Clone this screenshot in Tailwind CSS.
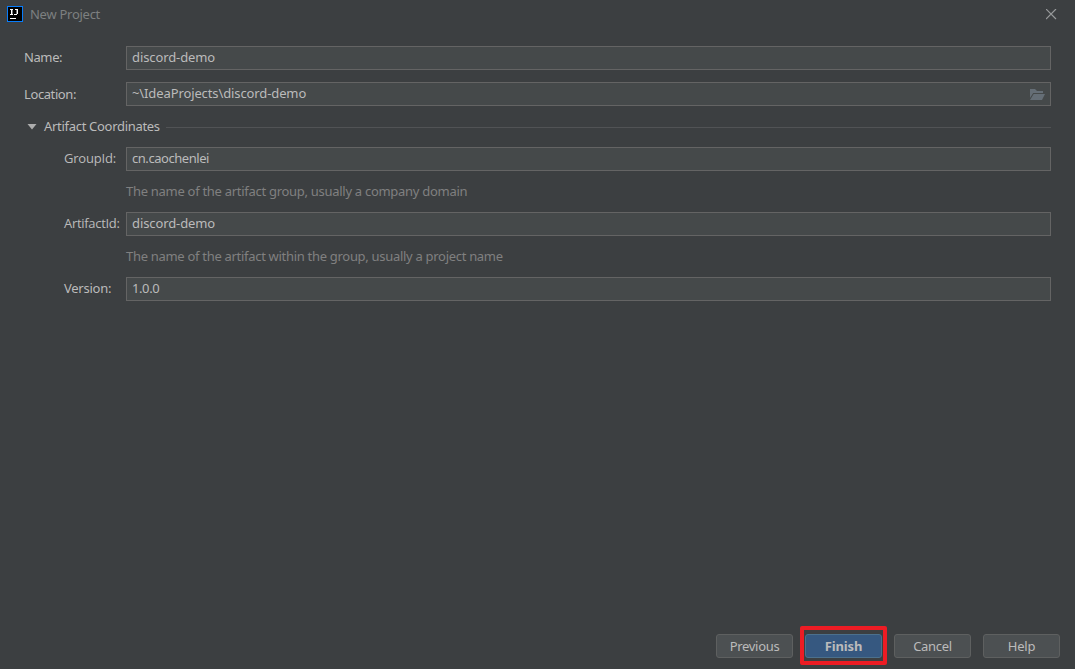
<!DOCTYPE html>
<html lang="en">
<head>
<meta charset="utf-8">
<title>New Project</title>
<script src="https://cdn.jsdelivr.net/npm/@tailwindcss/browser@4"></script>
</head>
<body class="flex h-screen w-screen flex-col overflow-hidden bg-[#3c3f41] font-['Noto_Sans',sans-serif] text-[13px] leading-[18px] text-[#bbbbbb]">
<header class="flex h-[30px] shrink-0 items-start pl-[7px] pr-[18px]">
  <svg class="mt-[6px]" width="16" height="16" viewBox="0 0 16 16" shape-rendering="crispEdges"><rect width="16" height="16" fill="#087cfa"/><rect x="1" y="1" width="14" height="14" fill="#000"/><path d="M3 3h3v1H3zM4 4h1v4H4zM3 8h3v1H3zM8 3h3v1H8zM10 4h1v4h-1zM7 8h3v1H7zM3 12h6v1H3z" fill="#fff"/><path d="M5 4h1v4H5zM9 4h1v4H9z" fill="#777"/></svg>
  <h1 class="ml-[7px] mt-[5px] tracking-[-0.27px] text-[#7d7f80]">New Project</h1>
  <svg class="ml-auto mt-[9px]" width="11" height="11" viewBox="0 0 11 11" fill="none" stroke="#989a9b" stroke-width="1.2"><path d="M0 0l10 10M10 0L0 10"/></svg>
</header>
<main class="flex flex-1 flex-col pl-6 pr-6 pt-4">
  <div class="flex h-6 items-center"><label class="w-[102px] pb-[2px] tracking-[-0.4px]">Name:</label><div class="flex h-6 flex-1 items-center border border-[#646464] bg-[#45494a] pb-[2px] pl-[5px] tracking-[-0.1px]">discord-demo</div></div>
  <div class="mt-3 flex h-6 items-center"><label class="w-[102px] tracking-[-0.4px]">Location:</label>
    <div class="flex h-6 flex-1 items-center border border-[#646464] bg-[#45494a] pl-[5px] pr-[5px]"><span class="pb-[2px] tracking-[-0.11px]">~\IdeaProjects\discord-demo</span>
      <svg class="ml-auto" width="15" height="11" viewBox="0 0 15 11" fill="#656e76"><path d="M0 9V0h5l2 2h6v2H3.200z"/><path d="M3.700 5H15l-3 6H0z"/></svg></div></div>
  <div class="mt-3 flex h-[18px] items-center pl-[3px]"><svg width="10" height="6" viewBox="0 0 10 6" fill="#adadad"><path d="M.5 0h9L5 5.500z"/></svg><span class="ml-[7px] pb-[2px] tracking-[-0.3px]">Artifact Coordinates</span><div class="ml-[6px] h-px flex-1 bg-[#515355]"></div></div>
  <div class="mt-[11px] flex h-6 items-center pl-10"><label class="w-[62px] pb-[2px] font-['Open_Sans',sans-serif] tracking-[-0.2px]">GroupId:</label><div class="flex h-6 flex-1 items-center border border-[#646464] bg-[#45494a] pb-[2px] pl-[5px] tracking-[-0.45px]">cn.caochenlei</div></div>
  <p class="mt-[11px] pl-[102px] tracking-[-0.286px] text-[#808080]">The name of the artifact group, usually a company domain</p>
  <div class="mt-3 flex h-6 items-center pl-10"><label class="w-[62px] pb-[2px] font-['Open_Sans',sans-serif] tracking-[-0.3px]">ArtifactId:</label><div class="flex h-6 flex-1 items-center border border-[#646464] bg-[#45494a] pb-[2px] pl-[5px] tracking-[-0.1px]">discord-demo</div></div>
  <p class="mt-[11px] pl-[102px] tracking-[-0.3px] text-[#808080]">The name of the artifact within the group, usually a project name</p>
  <div class="mt-3 flex h-6 items-center pl-10"><label class="w-[62px] pb-[2px] tracking-[-0.25px]">Version:</label><div class="flex h-6 flex-1 items-center border border-[#646464] bg-[#45494a] pb-[2px] pl-[5px] tracking-[-0.4px]">1.0.0</div></div>
</main>
<footer class="flex h-[43px] shrink-0 items-start justify-end pr-[15px]">
  <button class="mt-2 h-6 w-[77px] rounded-[3px] border border-[#5e6060] bg-[#4c5052] tracking-[-0.3px]">Previous</button>
  <div class="ml-[7px] flex h-[39px] w-[87px] items-center justify-center rounded-[2px] border-4 border-[#ed1c24]"><button class="h-6 w-[77px] rounded-[3px] border border-[#4c708c] bg-[#365880] font-bold tracking-[-0.15px]">Finish</button></div>
  <button class="ml-[7px] mt-2 h-6 w-[77px] rounded-[3px] border border-[#5e6060] bg-[#4c5052] tracking-[-0.3px]">Cancel</button>
  <button class="ml-3 mt-2 h-6 w-[77px] rounded-[3px] border border-[#5e6060] bg-[#4c5052] tracking-[-0.2px]">Help</button>
</footer>
</body>
</html>
